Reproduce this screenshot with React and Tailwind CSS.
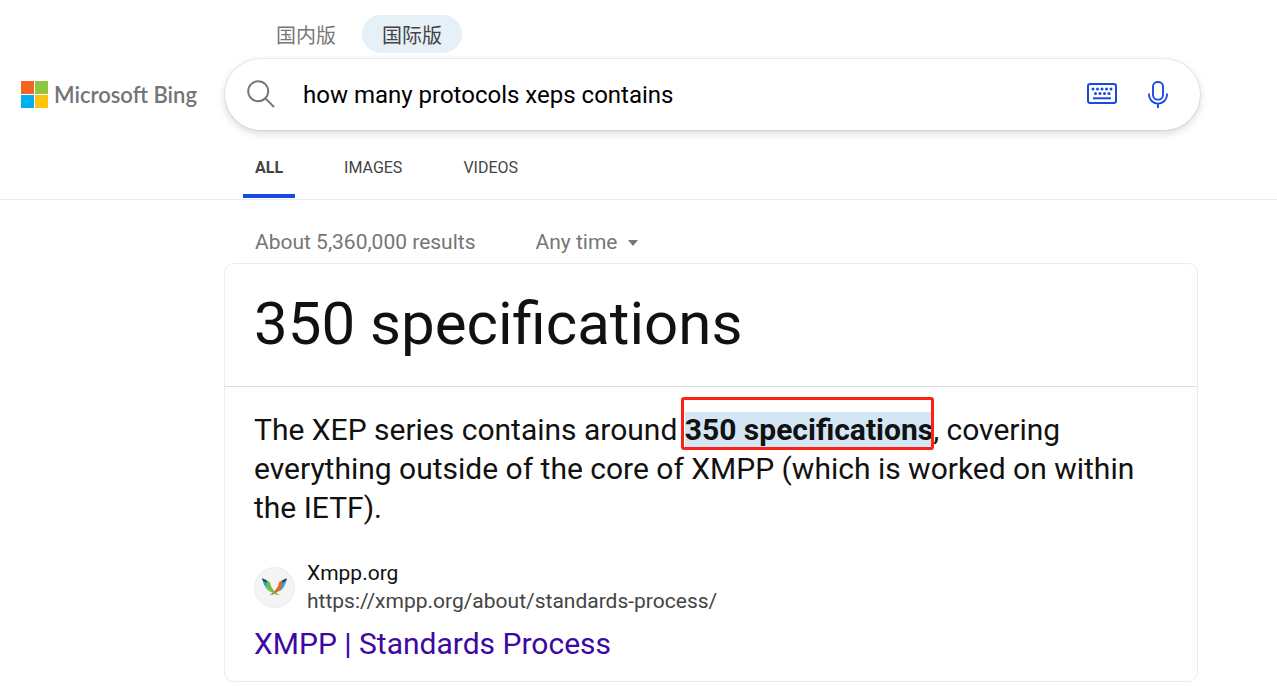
const keyDots = [
  [6, 6], [10.5, 6], [15, 6], [19.5, 6], [24, 6],
  [8.5, 10.5], [13, 10.5], [17.5, 10.5], [22, 10.5],
];

function MicrosoftMark() {
  return (
    <svg className="size-[27px] shrink-0" viewBox="0 0 27 27" aria-hidden="true">
      <path fill="#f46523" d="M0 0h13v13H0z" />
      <path fill="#8dc63f" d="M14 0h13v13H14z" />
      <path fill="#00adef" d="M0 14h13v13H0z" />
      <path fill="#ffc20e" d="M14 14h13v13H14z" />
    </svg>
  );
}

function SearchIcon() {
  return (
    <svg className="size-7" viewBox="0 0 28 28" fill="none" stroke="#777" strokeWidth="2" aria-hidden="true">
      <circle cx="11.2" cy="11.2" r="10" />
      <path d="M18.4 18.4 27 27" />
    </svg>
  );
}

function KeyboardIcon() {
  return (
    <svg className="h-[21px] w-[30px]" viewBox="0 0 30 21" fill="none" stroke="#174ae4" strokeWidth="2" aria-hidden="true">
      <rect x="1" y="1" width="28" height="19" rx="2.2" />
      {keyDots.map(([x, y]) => (
        <circle key={`${x}-${y}`} cx={x} cy={y} r="1.5" fill="#174ae4" stroke="none" />
      ))}
      <path d="M6 15.3h18" />
    </svg>
  );
}

function MicIcon() {
  return (
    <svg className="h-[27px] w-5" viewBox="0 0 20 27" fill="none" stroke="#174ae4" strokeWidth="1.9" aria-hidden="true">
      <rect x="5" y="1" width="10" height="17.6" rx="4.6" />
      <path d="M1 12.6v1.2a9 8.8 0 0 0 18 0v-1.2M10 22.6V27" />
    </svg>
  );
}

function XmppIcon() {
  return (
    <svg className="h-[18px] w-[25px]" viewBox="0 0 25 18" aria-hidden="true">
      <path fill="#27a3d4" d="M.3.3C1 6 3.500 11 8 13.500L5.500 3Z" />
      <path fill="#17456b" d="M.3.3 5 2.400 5.500 6C4 4.500 2.500 3.500.6 2.500Z" />
      <path fill="#27a3d4" d="M24.700.3C24 6 21.500 11 17 13.500L19.500 3Z" />
      <path fill="#17456b" d="M24.700.3 20 2.400 19.500 6C21 4.500 22.500 3.500 24.400 2.500Z" />
      <path fill="#e96425" d="M20.500 2.200 17 4.200C16.500 9 13.500 13 9 16c-.8.4-1.500.6-2 .7 2.200.5 4.500-.2 6.300-1.300C18.500 12.300 20.800 8 20.500 2.200Z" />
      <path fill="#6dbb45" d="M4.500 2.200 8 4.200C8.500 9 11.500 13 16 16c.8.4 1.500.6 2 .7-2.200.5-4.500-.2-6.300-1.300C6.500 12.300 4.200 8 4.500 2.200Z" />
      <path fill="#8ac94f" d="M2.800 6.500C4.800 8 6.500 10 8 12l2 2.400C6.800 13 4 10.500 2.800 6.500Z" />
    </svg>
  );
}

const tab = "flex h-full items-center border-b-4 px-3 pt-3 text-[16px] text-[#444]";

export default function App() {
  return (
    <div className="min-h-screen bg-white font-['Roboto','Noto_Sans_CJK_SC',sans-serif] text-[#111]">
      <header className="border-b border-[#ececec] pt-[15px]">
        <div className="ml-64 flex h-[38px] text-[20px]">
          <button type="button" className="rounded-full px-5 pt-1 font-normal text-[#777]">国内版</button>
          <button type="button" className="ml-[6px] rounded-full bg-[#e5f1f6] px-5 pt-1 font-normal text-[#444]">国际版</button>
        </div>
        <div className="mt-[6px] flex items-center">
          <a href="#home" className="flex w-[225px] shrink-0 items-center gap-[6px] pl-[21px]">
            <MicrosoftMark />
            <span className="font-['Lato',sans-serif] text-[22px] font-semibold whitespace-nowrap text-[#737478]">Microsoft Bing</span>
          </a>
          <form role="search" onSubmit={(e) => e.preventDefault()} className="mr-[77px] flex h-[71px] min-w-0 flex-1 items-center rounded-full bg-white pr-8 pl-[22px] shadow-[0_0_0_1px_rgba(0,0,0,0.06),0_3px_8px_rgba(0,0,0,0.16)]">
            <button type="submit" aria-label="Search" className="pb-[2px]"><SearchIcon /></button>
            <input type="text" aria-label="Search query" defaultValue="how many protocols xeps contains" className="ml-7 min-w-0 flex-1 bg-transparent text-[24px] text-black outline-none" />
            <button type="button" aria-label="Keyboard" className="pb-[2px]"><KeyboardIcon /></button>
            <button type="button" aria-label="Voice search" className="ml-[31px]"><MicIcon /></button>
          </form>
        </div>
        <nav className="ml-[243px] flex h-[69px] gap-[37px] pb-px">
          <a href="#all" className={`${tab} border-[#174ae4] font-bold`}>ALL</a>
          <a href="#images" className={`${tab} border-transparent`}>IMAGES</a>
          <a href="#videos" className={`${tab} border-transparent`}>VIDEOS</a>
        </nav>
      </header>

      <main className="mr-[79px] ml-[224px]">
        <div className="flex h-[63px] items-center gap-[60px] px-[31px] pt-[22px] text-[21px] text-[#767676]">
          <span>About 5,360,000 results</span>
          <button type="button" className="flex items-center gap-[11px]">
            Any time
            <svg className="h-[6px] w-[10px]" viewBox="0 0 10 6" aria-hidden="true"><path d="M0 0h10L5 6Z" fill="#767676" /></svg>
          </button>
        </div>
        <article className="rounded-[10px] border border-[#ececec] pb-[17px]">
          <h1 className="border-b border-[#ddd] px-[29px] pt-[21px] pb-[23px] text-[60px] leading-[78px]">350 specifications</h1>
          <p className="px-[29px] pt-[23px] text-[30px] leading-[39px]">
            The XEP series contains around{" "}
            <strong className="relative bg-[#d4e6f3] font-bold">
              350 specifications
              <span className="absolute -top-[15px] -right-px -bottom-[3px] -left-1 rounded-[3px] border-3 border-[#fb2314]" />
            </strong>
            , covering everything outside of the core of XMPP (which is worked on within the IETF).
          </p>
          <div className="mt-8 flex items-center gap-3 px-[29px] text-[21px] leading-7">
            <span className="flex size-[41px] shrink-0 items-center justify-center rounded-full border border-[#ececec] bg-[#f4f4f4]"><XmppIcon /></span>
            <div>
              <div>Xmpp.org</div>
              <div className="text-[#444]">https://xmpp.org/about/standards-process/</div>
            </div>
          </div>
          <h2 className="mt-[9px] px-[29px] text-[30px] leading-[40px]">
            <a href="#result" className="text-[#4007a2]">XMPP | Standards Process</a>
          </h2>
        </article>
      </main>
    </div>
  );
}
